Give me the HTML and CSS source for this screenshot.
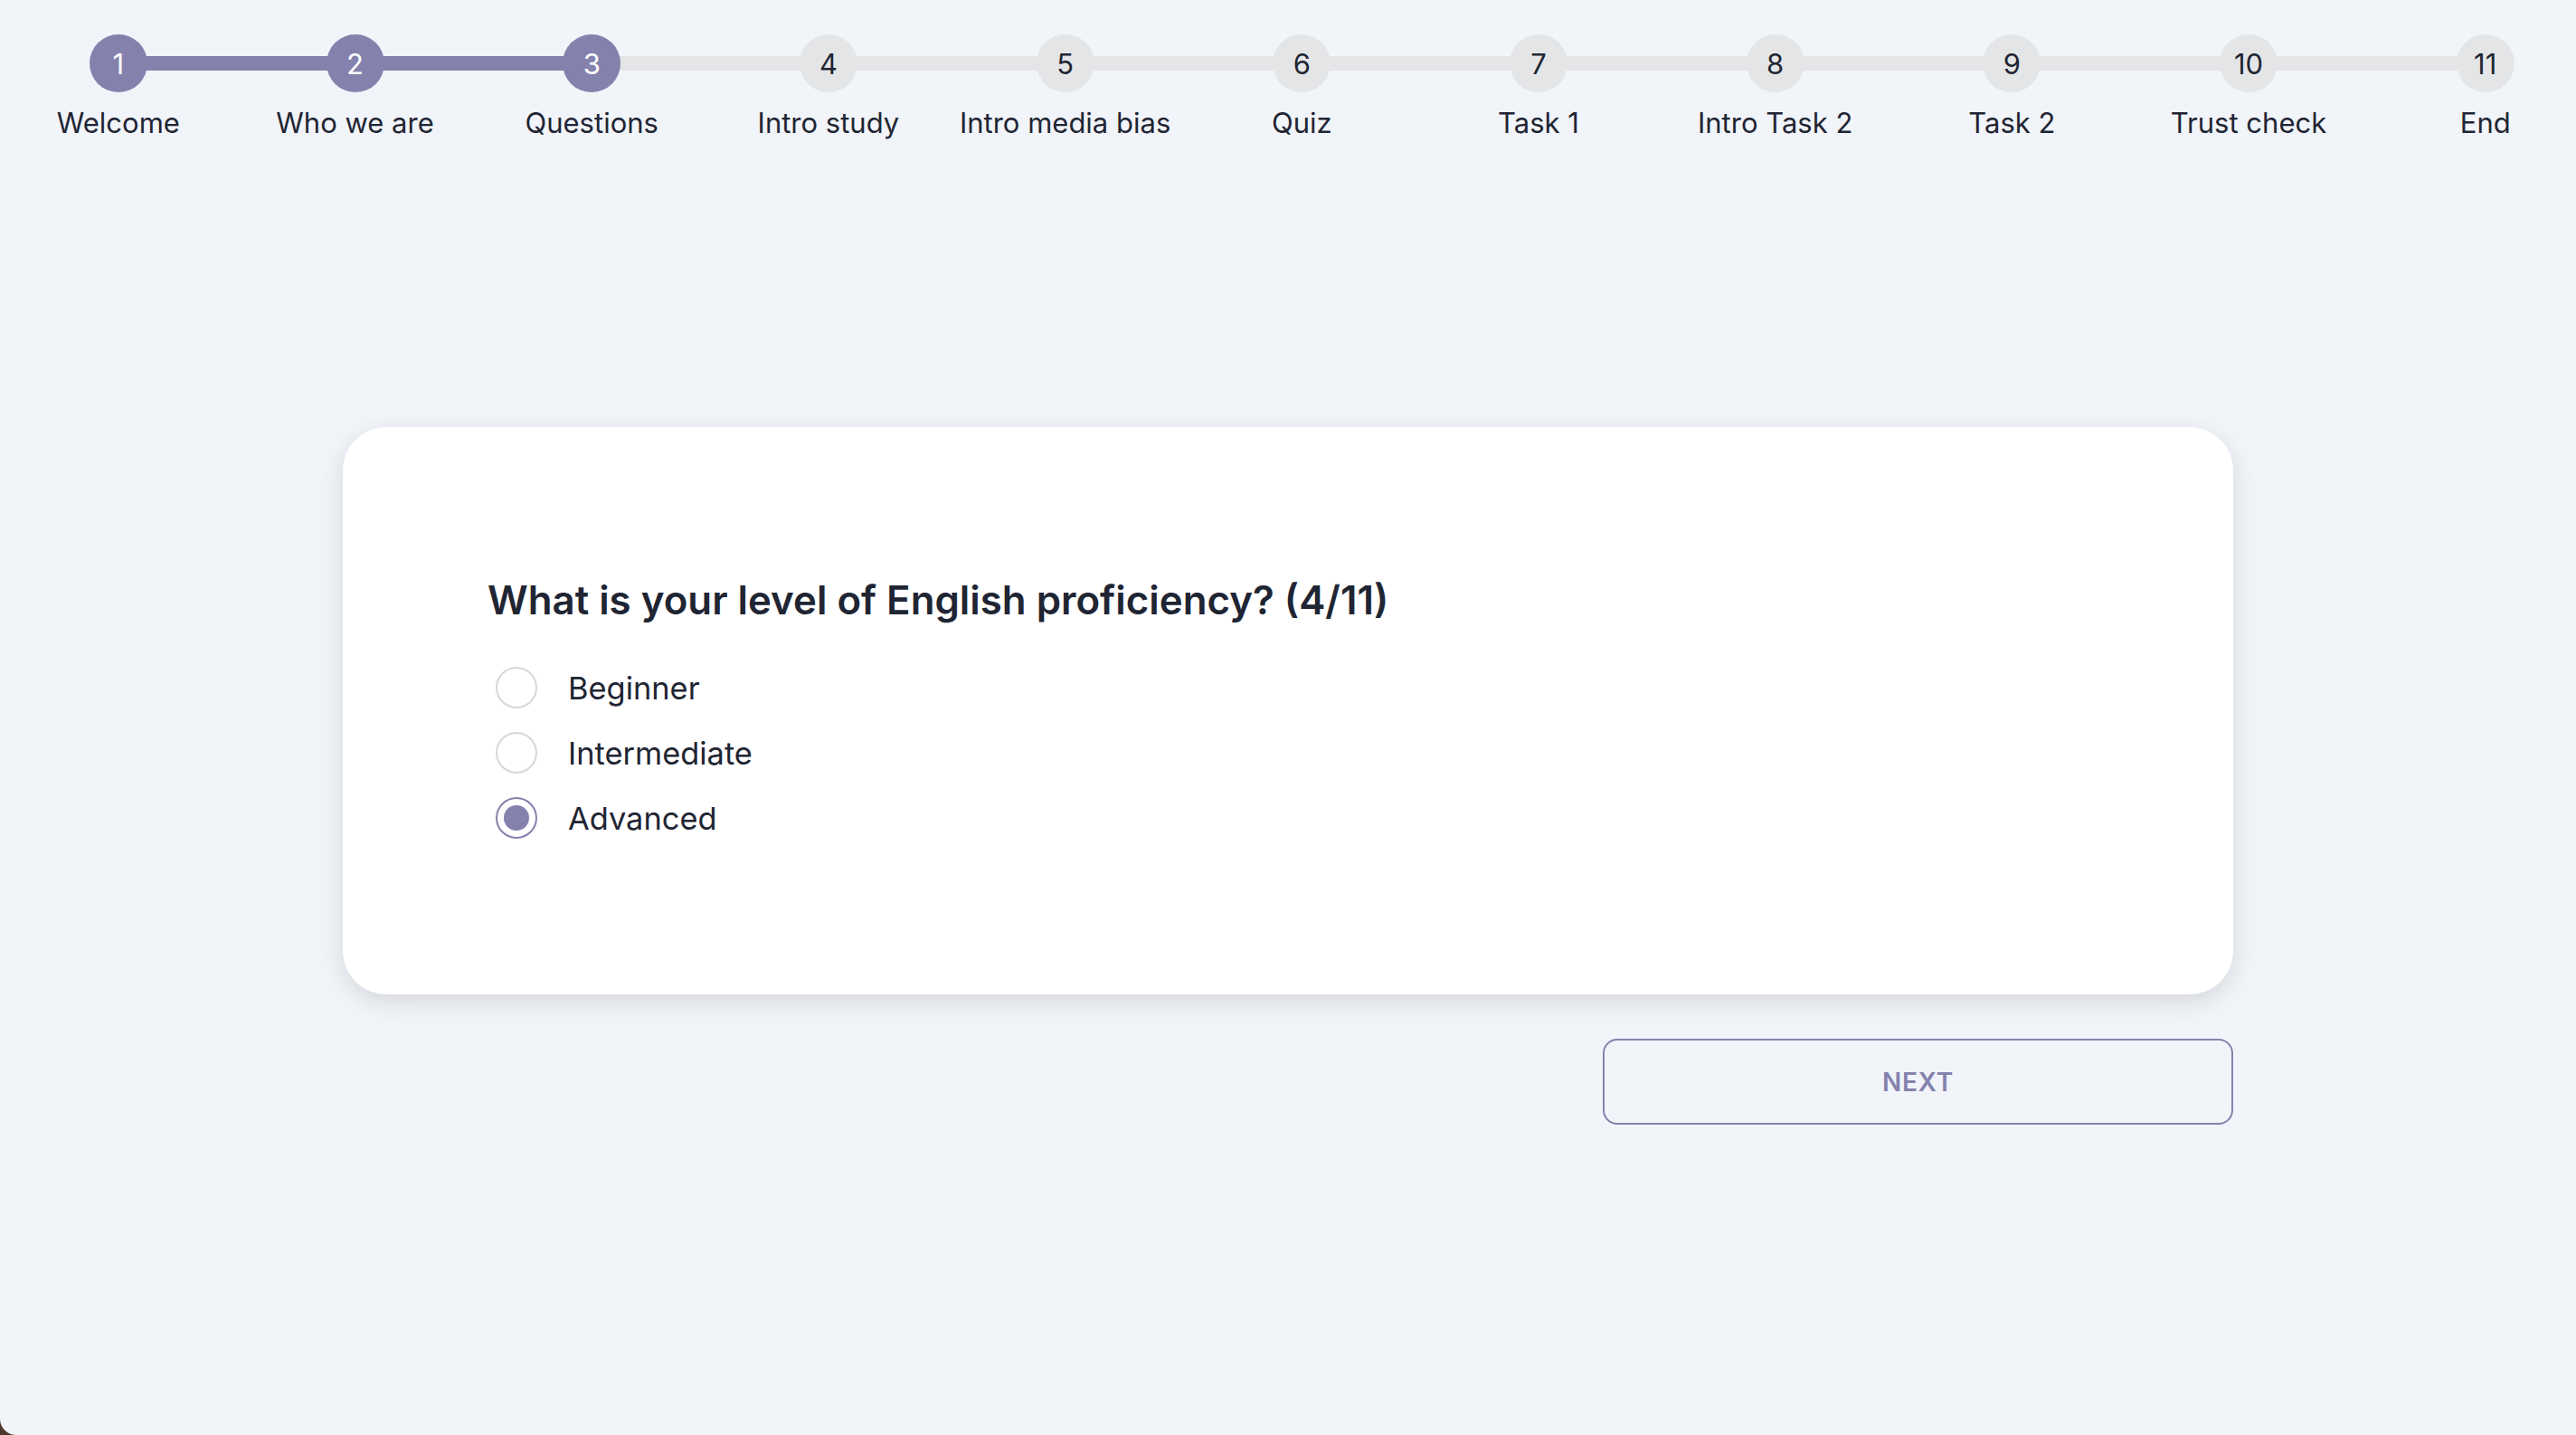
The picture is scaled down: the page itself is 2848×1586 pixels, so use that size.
FILE: index.html
```html
<!DOCTYPE html>
<html lang="en">
<head>
<meta charset="utf-8">
<title>Survey</title>
<link rel="stylesheet" href="styles.css">
</head>
<body>
<div class="page">
  <nav class="stepper">
    <div class="step done"><span class="dot">1</span><span class="label">Welcome</span></div>
    <div class="step done"><span class="line"></span><span class="dot">2</span><span class="label">Who we are</span></div>
    <div class="step done"><span class="line"></span><span class="dot">3</span><span class="label">Questions</span></div>
    <div class="step"><span class="line"></span><span class="dot">4</span><span class="label">Intro study</span></div>
    <div class="step"><span class="line"></span><span class="dot">5</span><span class="label">Intro media bias</span></div>
    <div class="step"><span class="line"></span><span class="dot">6</span><span class="label">Quiz</span></div>
    <div class="step"><span class="line"></span><span class="dot">7</span><span class="label">Task 1</span></div>
    <div class="step"><span class="line"></span><span class="dot">8</span><span class="label">Intro Task 2</span></div>
    <div class="step"><span class="line"></span><span class="dot">9</span><span class="label">Task 2</span></div>
    <div class="step"><span class="line"></span><span class="dot">10</span><span class="label">Trust check</span></div>
    <div class="step"><span class="line"></span><span class="dot">11</span><span class="label">End</span></div>
  </nav>

  <main class="content">
    <section class="card">
      <h1 class="question">What is your level of English proficiency? (4/11)</h1>
      <div class="options">
        <label class="option"><span class="radio"></span><span class="opt-text">Beginner</span></label>
        <label class="option"><span class="radio"></span><span class="opt-text">Intermediate</span></label>
        <label class="option"><span class="radio checked"></span><span class="opt-text">Advanced</span></label>
      </div>
    </section>
    <div class="actions">
      <button class="next">NEXT</button>
    </div>
  </main>
</div>
</body>
</html>
```
FILE: styles.css
```css
html {
  margin: 0;
  height: 100%;
  overflow: hidden;
  background: #4b372b;
}
body {
  margin: 0;
  height: 100%;
  background: #f1f4f9;
  border-bottom-left-radius: 18px;
  font-family: Inter, "Noto Sans", sans-serif;
  color: #1f2533;
}
.page {
  height: 100%;
}
.stepper {
  display: grid;
  grid-template-columns: repeat(11, 261.7px);
  padding-top: 38px;
}
.step {
  position: relative;
  display: flex;
  flex-direction: column;
  align-items: center;
}
.line {
  position: absolute;
  top: 24px;
  left: -50%;
  right: 50%;
  height: 16px;
  background: #e4e5e6;
  z-index: 0;
}
.step.done .line {
  background: #8482ad;
}
.dot {
  position: relative;
  z-index: 1;
  width: 64px;
  height: 64px;
  border-radius: 50%;
  background: #e4e5e6;
  color: #1f2533;
  display: flex;
  align-items: center;
  justify-content: center;
  font-size: 31px;
  line-height: 1;
}
.step.done .dot {
  background: #8482ad;
  color: #ffffff;
}
.label {
  margin-top: 10px;
  font-size: 31px;
  line-height: 48px;
  white-space: nowrap;
}
.content {
  width: 2090px;
  margin: 312px auto 0;
}
.card {
  background: #ffffff;
  border-radius: 48px;
  padding: 165px 160px 159px;
  box-shadow: 0 8px 28px rgba(0, 0, 0, 0.12);
}
.question {
  margin: 0 0 34px;
  font-size: 43.8px;
  line-height: 53px;
  font-weight: 600;
  color: #1f2533;
}
.options {
  display: flex;
  flex-direction: column;
}
.option {
  height: 72px;
  display: flex;
  align-items: center;
  gap: 34px;
  padding-left: 9px;
}
.radio {
  box-sizing: border-box;
  width: 46px;
  height: 46px;
  border-radius: 50%;
  border: 2px solid #d6d7da;
  display: flex;
  align-items: center;
  justify-content: center;
}
.radio.checked {
  border-color: #8482ad;
}
.radio.checked::after {
  content: "";
  width: 28px;
  height: 28px;
  border-radius: 50%;
  background: #8482ad;
}
.opt-text {
  font-size: 34.4px;
  color: #1f2533;
}
.actions {
  display: flex;
  justify-content: flex-end;
  margin-top: 49px;
}
.next {
  width: 697px;
  height: 95px;
  background: transparent;
  border: 2px solid #8482ad;
  border-radius: 16px;
  color: #8482ad;
  font-family: Inter, "Noto Sans", sans-serif;
  font-size: 28px;
  font-weight: 600;
  letter-spacing: 0.8px;
}
```
